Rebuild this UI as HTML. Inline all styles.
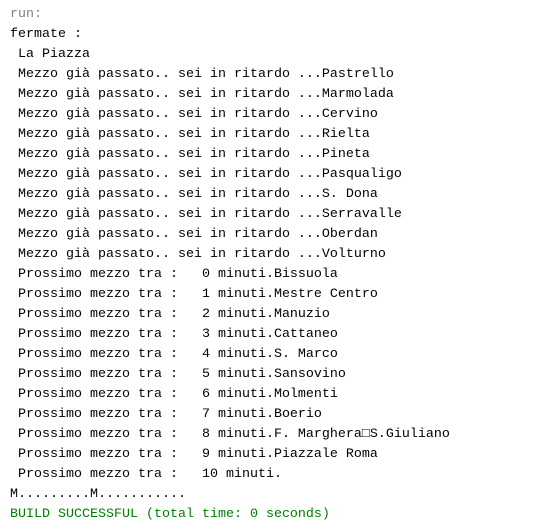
<!DOCTYPE html>
<html><head><meta charset="utf-8"><style>
html,body{margin:0;padding:0;background:#fff;width:541px;height:531px;overflow:hidden}
pre{margin:0;position:absolute;left:10px;top:5px;font-family:"Liberation Mono","DejaVu Sans Mono",monospace;font-size:13.33px;line-height:20px;color:#000}
.g{color:#808080}.s{color:#008000}
</style></head><body><pre><span class="g">run:</span>
fermate :
 La Piazza
 Mezzo già passato.. sei in ritardo ...Pastrello
 Mezzo già passato.. sei in ritardo ...Marmolada
 Mezzo già passato.. sei in ritardo ...Cervino
 Mezzo già passato.. sei in ritardo ...Rielta
 Mezzo già passato.. sei in ritardo ...Pineta
 Mezzo già passato.. sei in ritardo ...Pasqualigo
 Mezzo già passato.. sei in ritardo ...S. Dona
 Mezzo già passato.. sei in ritardo ...Serravalle
 Mezzo già passato.. sei in ritardo ...Oberdan
 Mezzo già passato.. sei in ritardo ...Volturno
 Prossimo mezzo tra :   0 minuti.Bissuola
 Prossimo mezzo tra :   1 minuti.Mestre Centro
 Prossimo mezzo tra :   2 minuti.Manuzio
 Prossimo mezzo tra :   3 minuti.Cattaneo
 Prossimo mezzo tra :   4 minuti.S. Marco
 Prossimo mezzo tra :   5 minuti.Sansovino
 Prossimo mezzo tra :   6 minuti.Molmenti
 Prossimo mezzo tra :   7 minuti.Boerio
 Prossimo mezzo tra :   8 minuti.F. Marghera□S.Giuliano
 Prossimo mezzo tra :   9 minuti.Piazzale Roma
 Prossimo mezzo tra :   10 minuti.
M.........M...........
<span class="s">BUILD SUCCESSFUL (total time: 0 seconds)</span></pre></body></html>
